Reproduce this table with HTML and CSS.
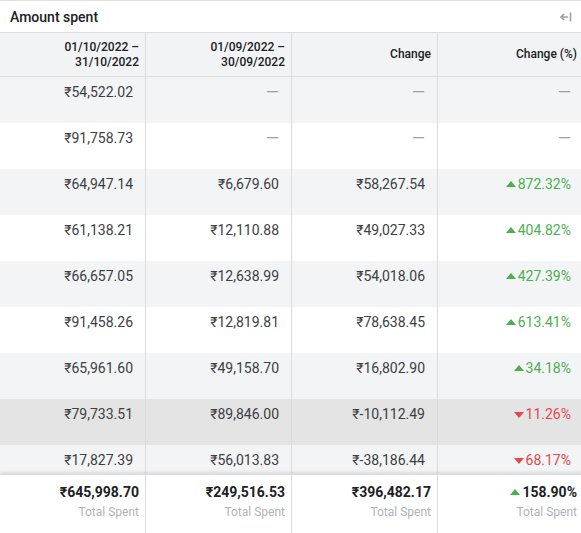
FILE: index.html
```html
<!DOCTYPE html>
<html lang="en">
<head>
    <meta charset="UTF-8">
    <meta name="viewport" content="width=device-width, initial-scale=1.0">
    <title>Amount spent</title>
    <link rel="stylesheet" href="styles.css">
</head>
<body>
    <div class="panel">
        <div class="panel-title">
            <span>Amount spent</span>
            <svg class="collapse-icon" width="12" height="12" viewBox="0 0 12 12">
                <path d="M1 6h7M4 3L1 6l3 3" fill="none" stroke="#a0a0a0" stroke-width="1.6"/>
                <path d="M10.5 1.5v9" stroke="#a0a0a0" stroke-width="1.6"/>
            </svg>
        </div>

        <div class="row head">
            <div class="cell">01/10/2022 –<br>31/10/2022</div>
            <div class="cell">01/09/2022 –<br>30/09/2022</div>
            <div class="cell">Change</div>
            <div class="cell">Change (%)</div>
        </div>

        <div class="table-body">
            <div class="row">
                <div class="cell">₹54,522.02</div>
                <div class="cell empty">—</div>
                <div class="cell empty">—</div>
                <div class="cell empty">—</div>
            </div>
            <div class="row">
                <div class="cell">₹91,758.73</div>
                <div class="cell empty">—</div>
                <div class="cell empty">—</div>
                <div class="cell empty">—</div>
            </div>
            <div class="row">
                <div class="cell">₹64,947.14</div>
                <div class="cell">₹6,679.60</div>
                <div class="cell">₹58,267.54</div>
                <div class="cell pct up"><span class="arrow"></span>872.32%</div>
            </div>
            <div class="row">
                <div class="cell">₹61,138.21</div>
                <div class="cell">₹12,110.88</div>
                <div class="cell">₹49,027.33</div>
                <div class="cell pct up"><span class="arrow"></span>404.82%</div>
            </div>
            <div class="row">
                <div class="cell">₹66,657.05</div>
                <div class="cell">₹12,638.99</div>
                <div class="cell">₹54,018.06</div>
                <div class="cell pct up"><span class="arrow"></span>427.39%</div>
            </div>
            <div class="row">
                <div class="cell">₹91,458.26</div>
                <div class="cell">₹12,819.81</div>
                <div class="cell">₹78,638.45</div>
                <div class="cell pct up"><span class="arrow"></span>613.41%</div>
            </div>
            <div class="row">
                <div class="cell">₹65,961.60</div>
                <div class="cell">₹49,158.70</div>
                <div class="cell">₹16,802.90</div>
                <div class="cell pct up"><span class="arrow"></span>34.18%</div>
            </div>
            <div class="row hover">
                <div class="cell">₹79,733.51</div>
                <div class="cell">₹89,846.00</div>
                <div class="cell">₹-10,112.49</div>
                <div class="cell pct down"><span class="arrow"></span>11.26%</div>
            </div>
            <div class="row">
                <div class="cell">₹17,827.39</div>
                <div class="cell">₹56,013.83</div>
                <div class="cell">₹-38,186.44</div>
                <div class="cell pct down"><span class="arrow"></span>68.17%</div>
            </div>
        </div>

        <div class="row foot">
            <div class="cell"><b>₹645,998.70</b><small>Total Spent</small></div>
            <div class="cell"><b>₹249,516.53</b><small>Total Spent</small></div>
            <div class="cell"><b>₹396,482.17</b><small>Total Spent</small></div>
            <div class="cell"><b class="total-up"><span class="arrow"></span>158.90%</b><small>Total Spent</small></div>
        </div>
    </div>
</body>
</html>
```

FILE: styles.css
```css
:root {
    --line: #dadce0;
    --text: #3c4043;
    --strong: #202124;
    --stripe: #f3f4f6;
    --hover: #e4e4e4;
    --green: #4caf50;
    --red: #e5484d;
}

body {
    margin: 0;
    padding: 0;
    font-family: Roboto, 'Liberation Sans', sans-serif;
    color: var(--text);
    background: #ffffff;
}

.panel {
    width: 581px;
    height: 533px;
    box-sizing: border-box;
    border-top: 1px solid #e0e0e0;
    display: flex;
    flex-direction: column;
    overflow: hidden;
}

.panel-title {
    height: 31px;
    flex: none;
    display: flex;
    align-items: center;
    justify-content: space-between;
    padding: 0 9px 0 10px;
    border-bottom: 1px solid var(--line);
    font-size: 14px;
    font-weight: 500;
    color: var(--strong);
}

.collapse-icon {
    margin-top: 1px;
}

.row {
    display: grid;
    grid-template-columns: 146px 146px 146px 1fr;
    flex: none;
}

.cell {
    border-right: 1px solid var(--line);
    text-align: right;
    font-size: 14px;
    line-height: 20px;
    padding: 5px 12px 0 0;
    height: 41px;
}

.cell:last-child {
    border-right: none;
    padding-right: 10px;
}

.head {
    background: #f1f3f4;
    border-bottom: 1px solid var(--line);
}

.head .cell {
    height: 43px;
    box-sizing: border-box;
    padding: 0 6px 0 0;
    display: flex;
    align-items: center;
    justify-content: flex-end;
    font-size: 12px;
    line-height: 15px;
    font-weight: 500;
    color: var(--strong);
}

.head .cell:last-child {
    padding-right: 4px;
}

.table-body {
    flex: 1;
    min-height: 0;
    overflow: hidden;
}

.table-body .row:nth-child(odd) {
    background: var(--stripe);
}

.table-body .row.hover {
    background: var(--hover);
}

.empty {
    color: #9aa0a6;
    font-size: 17px;
}

.arrow {
    display: inline-block;
    width: 0;
    height: 0;
    border-left: 5px solid transparent;
    border-right: 5px solid transparent;
    margin-right: 2px;
    vertical-align: 2px;
}

.up {
    color: var(--green);
}

.up .arrow,
.total-up .arrow {
    border-bottom: 6px solid var(--green);
}

.down {
    color: var(--red);
}

.down .arrow {
    border-top: 6px solid var(--red);
    vertical-align: 1px;
}

.foot {
    flex: none;
    height: 58px;
    border-top: 1px solid var(--line);
    box-shadow: 0 -2px 3px rgba(0, 0, 0, 0.1);
    background: #ffffff;
    position: relative;
}

.foot .cell {
    height: auto;
    padding: 7px 6px 0 0;
}

.foot .cell:last-child {
    padding-right: 4px;
}

.foot b {
    display: block;
    font-size: 14px;
    font-weight: 700;
    color: var(--strong);
    line-height: 20px;
}

.foot small {
    display: block;
    font-size: 12px;
    line-height: 20px;
    color: #b0b3b8;
}
```
